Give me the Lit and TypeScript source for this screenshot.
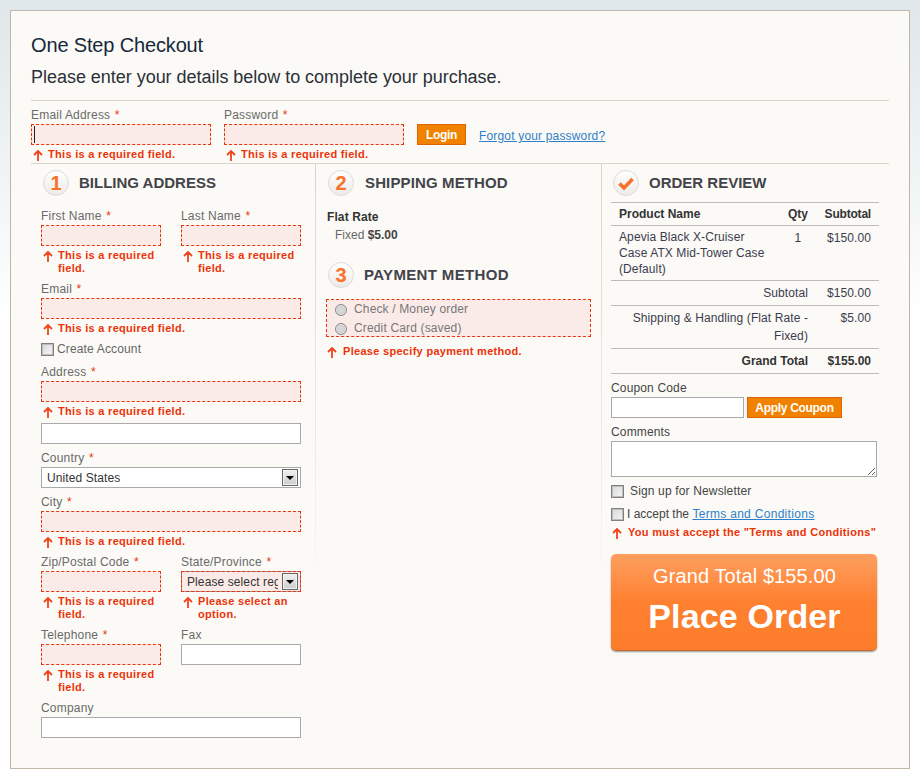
import { LitElement, html, css } from "lit";
import { customElement } from "lit/decorators.js";

const arrow = html`<svg class="arrow" width="10" height="12" viewBox="0 0 10 12"><path d="M5 12V2M1 6l4-4 4 4" fill="none" stroke="#f0431c" stroke-width="1.8"/></svg>`;

@customElement("app-root")
export class AppRoot extends LitElement {
  static styles = css`
    :host { display: block; box-sizing: border-box; padding: 10px; background: linear-gradient(#dfe7ea, #ffffff 320px) no-repeat; font-family: "Liberation Sans", Arial, sans-serif; font-size: 12px; color: #444; }
    * { box-sizing: border-box; }
    .panel { border: 1px solid #bfb5a8; background: #fbfaf6; padding: 22px 20px 30px; }
    h1 { margin: 0; font-size: 20px; line-height: 24px; font-weight: normal; color: #16283a; letter-spacing: -0.15px; }
    h2 { margin: 9px 0 12px; font-size: 18px; line-height: 22px; font-weight: normal; color: #2c3038; letter-spacing: -0.03px; }
    .login { border-top: 1px solid #d8d5cb; border-bottom: 1px solid #d8d5cb; padding: 6px 0 1px; display: flex; align-items: flex-start; height: 64px; }
    .login .field { width: 180px; margin-right: 13px; }
    .login .btn { margin: 17px 13px 0 0; }
    .forgot { margin-top: 22px; line-height: 15px; letter-spacing: 0.17px; }
    .columns { display: grid; grid-template-columns: 285px 286px 1fr; }
    .col { padding: 6px 11px 0 10px; background: linear-gradient(#d8d5cb, #f6f4ee) right top / 1px 399px no-repeat; }
    .col.first { padding-right: 15px; }
    .col.last { padding-left: 9px; padding-right: 10px; background: none; }
    .step { display: flex; align-items: center; height: 26px; margin: 0 0 0 2px; }
    .circle { width: 26px; height: 26px; border-radius: 50%; border: 1px solid #dddcd8; background: linear-gradient(#ffffff, #ecebe8); color: #f9722a; font-size: 20px; font-weight: bold; line-height: 24px; text-align: center; flex: none; }
    .circle svg { display: block; margin: -1px; }
    .step-title { margin-left: 10px; padding-bottom: 2px; font-size: 15px; font-weight: bold; color: #43434a; }
    .step-title.ship { margin-left: 11px; letter-spacing: 0.13px; }
    .step-title.pay { letter-spacing: 0.35px; }
    .stack { display: flex; flex-direction: column; gap: 6px; margin-top: 12px; }
    .pair { display: grid; grid-template-columns: 120px 120px; column-gap: 20px; }
    label { display: block; line-height: 16px; margin-bottom: 1px; color: #6a6a6a; letter-spacing: 0.2px; }
    .req { color: #eb340a; margin-left: 1px; }
    .input { display: block; width: 100%; height: 21px; border: 1px solid #aaa; background: #fff; padding: 0; margin: 0; outline: none; }
    .input.bad { border: 1px dashed #eb340a; background: #fbebe8; }
    .input.caret { background: linear-gradient(#222, #222) 2px 1px / 1px 17px no-repeat #fbebe8; }
    .err { display: flex; margin-top: 3px; color: #eb340a; font-size: 11px; font-weight: bold; line-height: 13px; letter-spacing: 0.3px; }
    .arrow { flex: none; margin: 1px 5px 0 2px; display: block; }
    .select { display: flex; align-items: center; height: 21px; border: 1px solid #aaa; background: #fff; padding: 0 2px 0 5px; color: #333; overflow: hidden; letter-spacing: 0.1px; }
    .select span { flex: 1; overflow: hidden; white-space: nowrap; margin-right: 4px; }
    .select.bad { border: 1px solid #999; outline: 1px dashed #eb340a; outline-offset: -1px; background: #fbebe8; }
    .drop { flex: none; width: 16px; height: 17px; border: 1px solid #666; box-shadow: inset 0 0 0 1px #f2f2f2; background: linear-gradient(#f0f0f0, #cccccc); display: flex; align-items: center; justify-content: center; }
    .drop i { display: block; width: 0; height: 0; border: 4px solid transparent; border-top: 4px solid #000; border-bottom: 0; }
    .check { appearance: none; -webkit-appearance: none; flex: none; display: block; width: 13px; height: 13px; margin: 0; border: 1px solid #808080; background: linear-gradient(135deg, #d8d8d8, #f6f6f6); box-shadow: inset 0 0 0 1px #bdbdbd; }
    .radio { appearance: none; -webkit-appearance: none; flex: none; display: block; width: 12px; height: 12px; margin: 0; border: 1px solid #888; border-radius: 50%; background: radial-gradient(circle, #d8d8d8 30%, #bdbdbd); box-shadow: inset 0 0 0 1px #e6e6e6; }
    .opt { display: flex; align-items: center; color: #666; letter-spacing: 0.15px; line-height: 15px; }
    .create { gap: 3px; margin: 1px 0; }
    .tight { margin-top: -1px; }
    .flat { margin: 13px 0 0 1px; line-height: 16px; font-weight: bold; color: #333; letter-spacing: 0.1px; }
    .fixed { margin: 2px 0 19px 9px; line-height: 16px; color: #666; }
    .fixed b { color: #444; }
    .methods { margin-top: 11px; height: 38px; border: 1px dashed #eb340a; background: #fbebe8; padding: 2px 8px 0; display: flex; flex-direction: column; gap: 4px; }
    .methods .opt { gap: 7px; color: #777; }
    .pay-err { margin-top: 8px; }
    .pay-err .arrow, .t-err .arrow { margin-left: 1px; margin-right: 6px; }
    table { width: 268px; margin-top: 6px; border-collapse: separate; border-spacing: 0; letter-spacing: 0.1px; color: #3c3c50; }
    th { height: 24px; padding: 0; border-top: 1px solid #bbb; border-bottom: 1px solid #bbb; color: #333; text-align: left; vertical-align: middle; letter-spacing: 0; }
    td { padding: 0; border-bottom: 1px solid #bbb; vertical-align: top; line-height: 16px; }
    .c1 { width: 169px; padding-left: 8px; }
    .c2 { width: 36px; text-align: center; }
    th.c3, .c3 { padding-right: 8px; text-align: right; }
    th.c3 { letter-spacing: -0.2px; }
    .item td { height: 55px; padding-top: 3px; }
    .item .c2, .item .c3 { padding-top: 4px; }
    .sum td { height: 25px; vertical-align: middle; }
    .ship td { height: 43px; padding-top: 3px; line-height: 18px; }
    .rl { text-align: right; padding-right: 8px; }
    .strong { font-weight: bold; color: #333; letter-spacing: 0; }
    .dark { color: #444; line-height: 16px; letter-spacing: 0.15px; margin: 6px 0 1px; }
    .coupon { display: flex; gap: 3px; }
    .coupon .input { width: 133px; }
    .btn { flex: none; display: flex; align-items: center; justify-content: center; height: 21px; border: 1px solid #de6306; background: #f18200; color: #fff; font-weight: bold; font-size: 12px; letter-spacing: -0.3px; }
    .btn.l { width: 49px; }
    .btn.a { width: 95px; }
    textarea.input { height: 36px; width: 266px; resize: both; }
    .news { margin-top: 8px; gap: 6px; color: #444; height: 13px; }
    .terms { margin-top: 10px; gap: 3px; color: #444; height: 13px; letter-spacing: 0; }
    a { color: #2f7fc8; text-decoration: underline; }
    .terms a { letter-spacing: 0.3px; }
    .t-err { margin-top: 5px; white-space: nowrap; }
    .place { margin-top: 15px; width: 266px; height: 97px; padding-left: 1px; border-radius: 5px; border-bottom: 1px solid #c8682c; background: linear-gradient(#fe9f60, #fe8030 50%, #fc7d2b); box-shadow: 0 1px 2px rgba(0,0,0,.4); color: #fff; text-align: center; }
    .place div { font-size: 20px; line-height: 24px; padding-top: 10px; letter-spacing: 0.1px; }
    .place b { display: block; font-size: 34px; line-height: 38px; margin-top: 9px; letter-spacing: 0.15px; }
  `;

  private err(text = "This is a required field.") {
    return html`<div class="err">${arrow}<span>${text}</span></div>`;
  }

  private field(name: string, req = true, bad = true) {
    return html`<div>
      <label>${name}${req ? html` <span class="req">*</span>` : ""}</label>
      <input class="input ${bad ? "bad" : ""}" />
      ${bad ? this.err() : ""}
    </div>`;
  }

  render() {
    return html`<div class="panel">
      <h1>One Step Checkout</h1>
      <h2>Please enter your details below to complete your purchase.</h2>
      <div class="login">
        <div class="field"><label>Email Address <span class="req">*</span></label><input class="input bad caret" />${this.err()}</div>
        <div class="field"><label>Password <span class="req">*</span></label><input class="input bad" />${this.err()}</div>
        <div class="btn l">Login</div>
        <a class="forgot" href="#">Forgot your password?</a>
      </div>
      <div class="columns">
        <div class="col first">
          <div class="step"><div class="circle">1</div><div class="step-title">BILLING ADDRESS</div></div>
          <div class="stack">
            <div class="pair">${this.field("First Name")}${this.field("Last Name")}</div>
            ${this.field("Email")}
            <div class="opt create"><input type="checkbox" class="check" /> Create Account</div>
            ${this.field("Address")}
            <input class="input tight" />
            <div><label>Country <span class="req">*</span></label><div class="select"><span>United States</span><div class="drop"><i></i></div></div></div>
            ${this.field("City")}
            <div class="pair">
              ${this.field("Zip/Postal Code")}
              <div><label>State/Province <span class="req">*</span></label><div class="select bad"><span>Please select region, state or province</span><div class="drop"><i></i></div></div>${this.err("Please select an option.")}</div>
            </div>
            <div class="pair">${this.field("Telephone")}${this.field("Fax", false, false)}</div>
            ${this.field("Company", false, false)}
          </div>
        </div>
        <div class="col">
          <div class="step"><div class="circle">2</div><div class="step-title ship">SHIPPING METHOD</div></div>
          <div class="flat">Flat Rate</div>
          <div class="fixed">Fixed <b>$5.00</b></div>
          <div class="step"><div class="circle">3</div><div class="step-title pay">PAYMENT METHOD</div></div>
          <div class="methods">
            <div class="opt"><input type="radio" class="radio" />Check / Money order</div>
            <div class="opt"><input type="radio" class="radio" />Credit Card (saved)</div>
          </div>
          <div class="pay-err">${this.err("Please specify payment method.")}</div>
        </div>
        <div class="col last">
          <div class="step"><div class="circle"><svg width="26" height="26" viewBox="0 0 26 26"><path d="M6.5 13.5l4.5 4.5 8.5-9" fill="none" stroke="#f9722a" stroke-width="3.6"/></svg></div><div class="step-title">ORDER REVIEW</div></div>
          <table>
            <tr><th class="c1">Product Name</th><th class="c2">Qty</th><th class="c3">Subtotal</th></tr>
            <tr class="item"><td class="c1">Apevia Black X-Cruiser<br />Case ATX Mid-Tower Case<br />(Default)</td><td class="c2">1</td><td class="c3">$150.00</td></tr>
            <tr class="sum"><td colspan="2" class="rl">Subtotal</td><td class="c3">$150.00</td></tr>
            <tr class="ship"><td colspan="2" class="rl">Shipping &amp; Handling (Flat Rate -<br />Fixed)</td><td class="c3">$5.00</td></tr>
            <tr class="sum strong"><td colspan="2" class="rl">Grand Total</td><td class="c3">$155.00</td></tr>
          </table>
          <div class="dark">Coupon Code</div>
          <div class="coupon"><input class="input" /><div class="btn a">Apply Coupon</div></div>
          <div class="dark">Comments</div>
          <textarea class="input"></textarea>
          <div class="opt news"><input type="checkbox" class="check" />Sign up for Newsletter</div>
          <div class="opt terms"><input type="checkbox" class="check" /><span>I accept the <a href="#">Terms and Conditions</a></span></div>
          <div class="t-err">${this.err('You must accept the "Terms and Conditions"')}</div>
          <div class="place"><div>Grand Total $155.00</div><b>Place Order</b></div>
        </div>
      </div>
    </div>`;
  }
}
